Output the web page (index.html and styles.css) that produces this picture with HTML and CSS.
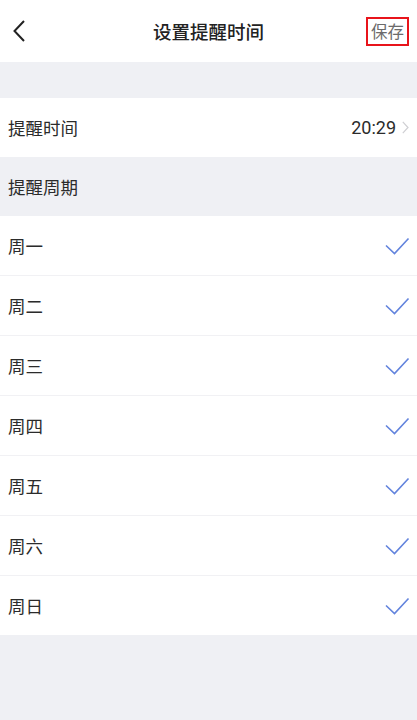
FILE: index.html
```html
<!DOCTYPE html>
<html lang="zh-CN">
<head>
<meta charset="utf-8">
<title>设置提醒时间</title>
<link rel="stylesheet" href="styles.css">
</head>
<body>
<div class="page">
  <header class="topbar">
    <div class="back">
      <svg width="12" height="22" viewBox="0 0 12 22"><path d="M11 1 L1.5 11 L11 21" fill="none" stroke="#222" stroke-width="2"/></svg>
    </div>
    <h1 class="title">设置提醒时间</h1>
    <div class="save">保存</div>
  </header>
  <div class="gap"></div>
  <div class="row white">
    <span class="label">提醒时间</span>
    <span class="value">20:29
      <svg class="arrow" width="7" height="13" viewBox="0 0 7 13"><path d="M0.8 0.8 L6 6.5 L0.8 12.2" fill="none" stroke="#cfcfd3" stroke-width="1.2"/></svg>
    </span>
  </div>
  <div class="row section"><span class="label">提醒周期</span></div>
  <ul class="days">
    <li class="row white day"><span class="label">周一</span><svg class="check" width="25" height="18" viewBox="0 0 25 18"><path d="M1 8.5 L9.5 16.5 L23.5 1.5" fill="none" stroke="#6384dd" stroke-width="1.6"/></svg></li>
    <li class="row white day"><span class="label">周二</span><svg class="check" width="25" height="18" viewBox="0 0 25 18"><path d="M1 8.5 L9.5 16.5 L23.5 1.5" fill="none" stroke="#6384dd" stroke-width="1.6"/></svg></li>
    <li class="row white day"><span class="label">周三</span><svg class="check" width="25" height="18" viewBox="0 0 25 18"><path d="M1 8.5 L9.5 16.5 L23.5 1.5" fill="none" stroke="#6384dd" stroke-width="1.6"/></svg></li>
    <li class="row white day"><span class="label">周四</span><svg class="check" width="25" height="18" viewBox="0 0 25 18"><path d="M1 8.5 L9.5 16.5 L23.5 1.5" fill="none" stroke="#6384dd" stroke-width="1.6"/></svg></li>
    <li class="row white day"><span class="label">周五</span><svg class="check" width="25" height="18" viewBox="0 0 25 18"><path d="M1 8.5 L9.5 16.5 L23.5 1.5" fill="none" stroke="#6384dd" stroke-width="1.6"/></svg></li>
    <li class="row white day"><span class="label">周六</span><svg class="check" width="25" height="18" viewBox="0 0 25 18"><path d="M1 8.5 L9.5 16.5 L23.5 1.5" fill="none" stroke="#6384dd" stroke-width="1.6"/></svg></li>
    <li class="row white day"><span class="label">周日</span><svg class="check" width="25" height="18" viewBox="0 0 25 18"><path d="M1 8.5 L9.5 16.5 L23.5 1.5" fill="none" stroke="#6384dd" stroke-width="1.6"/></svg></li>
  </ul>
</div>
</body>
</html>
```

FILE: styles.css
```css
* { box-sizing: border-box; }
html, body {
  margin: 0;
  padding: 0;
  background: #eff0f4;
  font-family: "Noto Sans CJK SC", "Noto Sans", sans-serif;
  color: #2b2b2b;
}
.page {
  width: 417px;
  min-height: 720px;
  background: #eff0f4;
}
.topbar {
  height: 62px;
  background: #fff;
  display: grid;
  grid-template-columns: 60px 1fr 60px;
  align-items: center;
}
.back {
  display: flex;
  align-items: center;
  padding-left: 13px;
  padding-top: 0px;
}
.back svg { display: block; }
.title {
  margin: 0;
  text-align: center;
  font-size: 18.5px;
  font-weight: 500;
  color: #222;
  line-height: 1;
}
.save {
  justify-self: end;
  margin-right: 8px;
  width: 43px;
  height: 29px;
  border: 2px solid #e8141b;
  display: flex;
  align-items: center;
  justify-content: center;
  font-size: 16.5px;
  color: #6b6b6b;
  line-height: 1;
  margin-top: 0px;
}
.gap { height: 36px; }
.row {
  height: 59px;
  display: flex;
  align-items: center;
  justify-content: space-between;
  padding: 0 8px;
}
.white { background: #fff; }
.section { background: #eff0f4; }
.label {
  font-size: 17.5px;
  color: #2b2b2b;
  line-height: 1;
}
.value {
  display: flex;
  align-items: center;
  gap: 6px;
  font-family: "Roboto", "Liberation Sans", sans-serif;
  font-size: 18px;
  color: #2b2b2b;
}
.arrow { display: block; }
.days {
  list-style: none;
  margin: 0;
  padding: 0;
}
.day { border-bottom: 1px solid #f1f1f4; height: 60px; }
.day:last-child { border-bottom: none; height: 59px; }
.check { display: block; margin-right: -1px; }
```
